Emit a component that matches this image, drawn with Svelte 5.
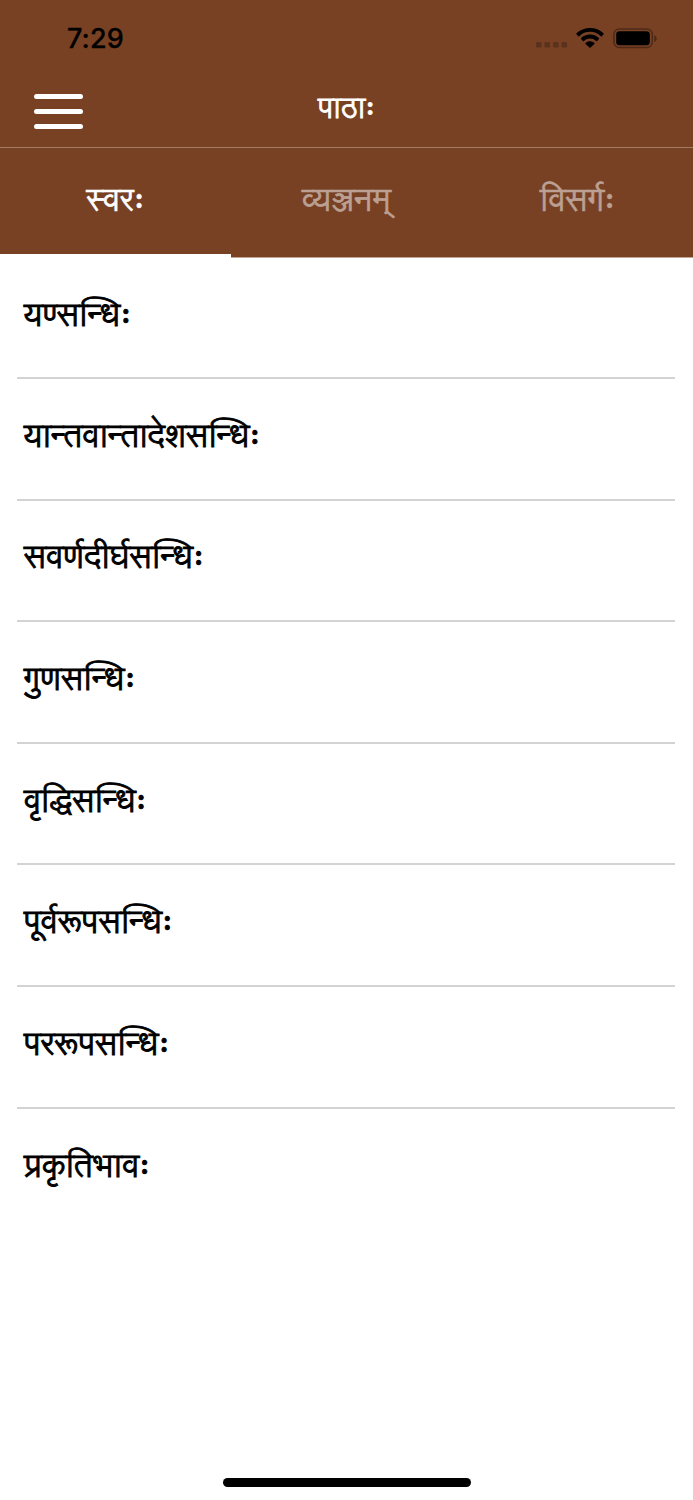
<script lang="ts">
  const tabs = ['स्वरः', 'व्यञ्जनम्', 'विसर्गः'];
  const lessons = [
    'यण्सन्धिः',
    'यान्तवान्तादेशसन्धिः',
    'सवर्णदीर्घसन्धिः',
    'गुणसन्धिः',
    'वृद्धिसन्धिः',
    'पूर्वरूपसन्धिः',
    'पररूपसन्धिः',
    'प्रकृतिभावः'
  ];

  let active = $state(0);
</script>

<div class="screen">
  <header>
    <div class="status">
      <span class="time">7:29</span>
      <div class="signals">
        <svg class="dots" width="32" height="6" viewBox="0 0 32 6">
          {#each [0, 8.5, 17, 25.5] as x}
            <rect {x} y="0" width="5.6" height="5.6" rx="1.3" />
          {/each}
        </svg>
        <svg class="wifi" width="28" height="20" viewBox="0 0 28 20">
          <path d="M14 0C8.800 0 4 2 .5 5.300q-.5.5 0 1L2.200 8.200q.5.5 1 0a15.500 15.500 0 0 1 21.600 0q.5.5 1 0l1.700-1.900q.5-.5 0-1A19.600 19.600 0 0 0 14 0z" />
          <path d="M14 6.600c-3.500 0-6.600 1.300-8.900 3.400q-.5.5 0 1l1.800 1.900q.5.5 1 0a9 9 0 0 1 12.200 0q.5.5 1 0l1.800-1.900q.5-.5 0-1A13.200 13.200 0 0 0 14 6.600z" />
          <path d="M14 13.300c-1.700 0-3.200.6-4.300 1.500q-.6.5 0 1.100l3.700 3.700q.6.5 1.200 0l3.700-3.700q.6-.6 0-1.100a6.800 6.800 0 0 0-4.300-1.500z" />
        </svg>
        <svg class="battery" width="45" height="21" viewBox="0 0 45 21">
          <rect class="shell" x=".9" y=".9" width="38.400" height="18.700" rx="5.500" />
          <rect x="3.200" y="3.200" width="33.600" height="14" rx="3.300" />
          <path class="tip" d="M41.200 7v7q2.600-1 2.600-3.500T41.200 7z" />
        </svg>
      </div>
    </div>
    <div class="bar">
      <button class="menu" aria-label="Menu">
        <i></i><i></i><i></i>
      </button>
      <h1>पाठाः</h1>
    </div>
    <nav>
      {#each tabs as tab, i}
        <button class="tab" class:active={active === i} onclick={() => (active = i)}>{tab}</button>
      {/each}
    </nav>
  </header>

  <ul>
    {#each lessons as lesson}
      <li>{lesson}</li>
    {/each}
  </ul>

  <footer><div class="home"></div></footer>
</div>

<style>
  :global(body) { margin: 0; background: #fff; }
  .screen { display: flex; flex-direction: column; width: 693px; height: 1500px; overflow: hidden; background: #fff; color: #000; font-family: 'Lohit Devanagari', 'Noto Sans', sans-serif; }
  header { background: #784124; }
  button { padding: 0; border: 0; background: none; font: inherit; cursor: pointer; }
  svg { display: block; }

  .status { display: flex; justify-content: space-between; align-items: center; height: 76px; padding: 0 35.500px 0 67px; box-sizing: border-box; }
  .time { padding-top: 2px; font: 550 27px/32px Inter, sans-serif; letter-spacing: 0.1px; -webkit-text-stroke: 0.3px; }
  .signals { display: flex; align-items: center; }
  .dots { margin: 14px 8px 0 0; fill: #5b321c; }
  .wifi { margin-right: 9px; }
  .shell { fill: none; stroke: #4e2a17; stroke-width: 1.5; }
  .tip { fill: #4e2a17; }

  .bar { display: grid; grid-template-columns: 1fr auto 1fr; align-items: center; height: 72px; box-sizing: border-box; border-bottom: 1px solid #a17b66; }
  .menu { display: flex; flex-direction: column; gap: 9.5px; width: 49px; margin: 0 0 0 33.500px; }
  .menu i { height: 5.2px; border-radius: 3px; background: #fff; }
  h1 { margin: 0 0 3px; color: #fff; font-size: 29.5px; font-weight: 400; line-height: 40px; -webkit-text-stroke: 0.8px; }

  nav { display: flex; height: 110px; border-bottom: 1px solid #c0a494; box-sizing: border-box; }
  .tab { flex: 1; padding-top: 2px; border-bottom: 3px solid transparent; color: #bba093; font-size: 32.3px; line-height: 40px; -webkit-text-stroke: 0.7px; }
  .tab.active { margin-bottom: -1px; border-bottom: 4px solid #fff; color: #fff; }

  ul { margin: 0; padding: 0 18px 0 17px; list-style: none; }
  li { display: flex; align-items: center; height: 121.6px; padding: 0 0 2px 7px; box-sizing: border-box; border-bottom: 2px solid #d3d3d3; font-size: 32.2px; line-height: 44px; -webkit-text-stroke: 0.9px; }
  li:last-child { border-bottom: 0; }

  /* the first row sits tight under the tab bar */
  li:first-child { height: 121px; }

  footer { display: flex; justify-content: center; margin-top: auto; padding-bottom: 13.5px; }
  .home { width: 248px; height: 8.5px; border-radius: 5px; background: #000; }
</style>
